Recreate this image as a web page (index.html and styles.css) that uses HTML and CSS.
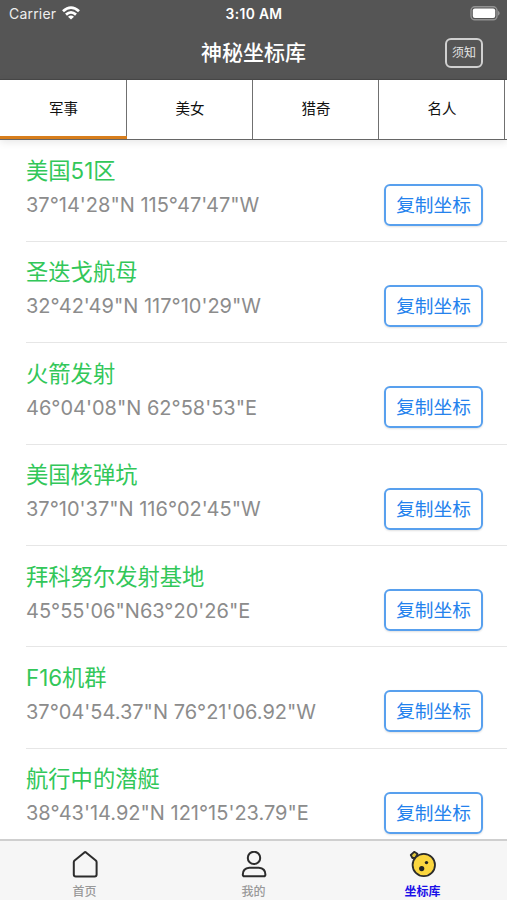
FILE: index.html
```html
<!DOCTYPE html>
<html lang="zh-CN">
<head>
<meta charset="utf-8">
<title>神秘坐标库</title>
<link rel="stylesheet" href="styles.css">
</head>
<body>
<div class="app">
  <header class="header">
    <div class="status">
      <div class="carrier"><span>Carrier</span>
        <svg class="wifi" width="18" height="14" viewBox="0 0 18 14" fill="none" stroke="#fff" stroke-width="2.8"><path d="M1 5.2Q9-2 17 5.2M4 8.6Q9 4.2 14 8.6"/><path d="M9 13.6 6 10.8Q9 8.4 12 10.8Z" fill="#fff" stroke="none"/></svg>
      </div>
      <span class="time">3:10 AM</span>
      <svg class="battery" width="31" height="15" viewBox="0 0 31 15"><rect x="1" y=".8" width="26" height="13" rx="3.8" fill="none" stroke="#929292" stroke-width="1.4"/><rect x="2.8" y="2.6" width="22.4" height="9.4" rx="2" fill="#fff"/><path d="M28.2 4.8Q31 7.3 28.2 9.8Z" fill="#a2a2a2"/></svg>
    </div>
    <div class="nav">
      <h1 class="nav-title">神秘坐标库</h1>
      <button class="notice">须知</button>
    </div>
  </header>
  <nav class="tabs">
    <div class="tab active">军事</div>
    <div class="tab">美女</div>
    <div class="tab">猎奇</div>
    <div class="tab">名人</div>
    <div class="tab"></div>
  </nav>
  <main class="list">
    <section class="row"><div class="info"><h2>美国51区</h2><p>37°14'28"N 115°47'47"W</p></div><button class="copy">复制坐标</button></section>
    <section class="row"><div class="info"><h2>圣迭戈航母</h2><p>32°42'49"N 117°10'29"W</p></div><button class="copy">复制坐标</button></section>
    <section class="row"><div class="info"><h2>火箭发射</h2><p>46°04'08"N 62°58'53"E</p></div><button class="copy">复制坐标</button></section>
    <section class="row"><div class="info"><h2>美国核弹坑</h2><p>37°10'37"N 116°02'45"W</p></div><button class="copy">复制坐标</button></section>
    <section class="row"><div class="info"><h2>拜科努尔发射基地</h2><p>45°55'06"N63°20'26"E</p></div><button class="copy">复制坐标</button></section>
    <section class="row"><div class="info"><h2>F16机群</h2><p>37°04'54.37"N 76°21'06.92"W</p></div><button class="copy">复制坐标</button></section>
    <section class="row"><div class="info"><h2>航行中的潜艇</h2><p>38°43'14.92"N 121°15'23.79"E</p></div><button class="copy">复制坐标</button></section>
  </main>
  <footer class="tabbar">
    <div class="item">
      <svg width="28" height="28" viewBox="0 0 28 28" fill="none" stroke="#2c2c2c" stroke-width="2" stroke-linejoin="round"><path d="M13.4 1.4Q14.2.8 15 1.4L24.8 9.5Q25.6 10.2 25.6 11.2V23.4Q25.6 25.4 23.6 25.4H4.8Q2.8 25.4 2.8 23.4V11.2Q2.8 10.2 3.6 9.5Z"/></svg>
      <span>首页</span>
    </div>
    <div class="item">
      <svg width="28" height="28" viewBox="0 0 28 28" fill="none" stroke="#2c2c2c" stroke-width="2" stroke-linejoin="round"><circle cx="14" cy="6.9" r="6.2"/><path d="M9.4 16.8H18.8Q25.4 17.5 25.4 23.4Q25.4 25.2 23.8 25.2H4.4Q2.8 25.2 2.8 23.4Q2.8 17.5 9.4 16.8Z"/></svg>
      <span>我的</span>
    </div>
    <div class="item selected">
      <svg width="28" height="28" viewBox="0 0 28 28"><path d="M5.2.8 8.4 2.8 6.6 6.8 3.4 7 1.8 4Z" fill="#dfc53c" stroke="#2b2b2b" stroke-width="1.8" stroke-linejoin="round"/><circle cx="14.8" cy="14" r="11.2" fill="#fbd63e" stroke="#2b2b2b" stroke-width="1.8"/><circle cx="12.7" cy="17.6" r="2.6" fill="#222"/><circle cx="17.5" cy="11.6" r="1.7" fill="#222"/></svg>
      <span>坐标库</span>
    </div>
  </footer>
</div>
</body>
</html>
```

FILE: styles.css
```css
* { box-sizing: border-box; }
body { margin: 0; background: #fff; font-family: Inter, "Noto Sans CJK SC", sans-serif; }
h1, h2, p { margin: 0; }
button { font-family: inherit; padding: 0; background: none; }
.app { width: 507px; height: 900px; display: flex; flex-direction: column; overflow: hidden; }
.header { height: 80px; flex: none; background: #555; color: #fff; border-bottom: 1px solid #484848; }
.status { height: 28px; display: grid; grid-template-columns: 1fr auto 1fr; align-items: center; padding: 0 6px 0 9px; font-size: 14px; line-height: 28px; }
.carrier { display: flex; align-items: center; gap: 6px; color: #eee; letter-spacing: .2px; }
.wifi { margin-top: -2px; }
.time { font-size: 13.8px; font-weight: 600; letter-spacing: .35px; margin-right: 2px; }
.battery { justify-self: end; margin-top: -1px; }
.nav { height: 49px; display: grid; grid-template-columns: 1fr auto 1fr; align-items: center; padding-right: 24px; padding-left: 24px; }
.nav-title { grid-column: 2; font-size: 21px; font-weight: 500; line-height: 30px; }
.notice { justify-self: end; width: 38px; height: 30px; border: 2px solid #d0d0d0; border-radius: 6px; color: #e5e5e5; font-size: 12px; line-height: 25px; }
.tabs { height: 60px; flex: none; display: flex; overflow: hidden; border-bottom: 1px solid #666; box-shadow: 0 2px 8px rgba(0,0,0,.1); background: #fff; z-index: 1; }
.tab { width: 126px; height: 59px; flex: none; text-align: center; font-size: 14.5px; line-height: 58px; color: #111; box-shadow: inset -1px 0 #707070; }
.tab:first-child { width: 127px; }
.active { border-bottom: 3px solid #d87e1c; }
.list { flex: 1; min-height: 0; overflow: hidden; padding-top: .5px; }
.row { height: 101.4px; margin-left: 26px; padding-right: 24px; display: flex; justify-content: space-between; border-bottom: 1px solid #e6e6e6; }
.info { padding-top: 13.5px; white-space: nowrap; }
.info h2 { color: #32c759; font-size: 22.3px; font-weight: 400; line-height: 34px; }
.info p { color: #8c8c8c; font-size: 20px; line-height: 34px; }
.copy { width: 99px; height: 42px; margin-top: 43px; border: 2px solid #58a0ee; border-radius: 6px; color: #2482ed; font-size: 18.7px; line-height: 39px; box-shadow: 0 1px 2px rgba(0,0,0,.12); }
.tabbar { height: 61px; flex: none; display: grid; grid-template-columns: repeat(3, 1fr); border-top: 2px solid #cfcfcf; background: #f6f6f6; }
.item { display: flex; flex-direction: column; align-items: center; padding-top: 10px; color: #999; font-size: 12px; font-weight: 500; line-height: 25px; }
.item svg { flex: none; }
.selected { color: #1b10e8; font-weight: 700; }
```
